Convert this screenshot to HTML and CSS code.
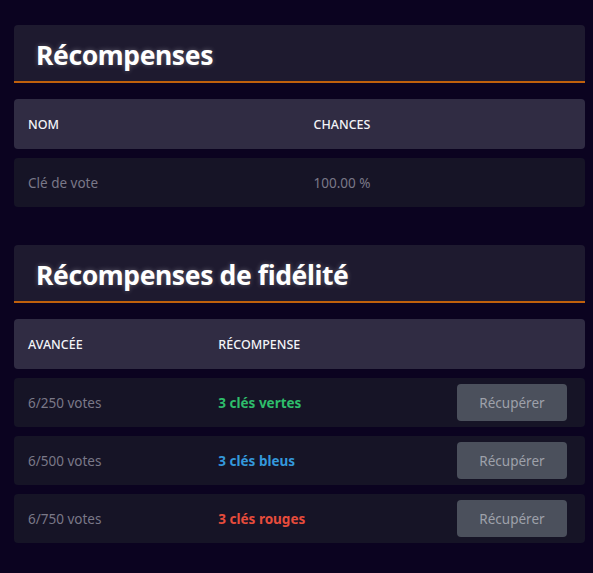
FILE: index.html
```html
<!DOCTYPE html>
<html lang="fr">
<head>
<meta charset="utf-8">
<link rel="stylesheet" href="styles.css">
</head>
<body>
<main class="page">
  <section class="block">
    <h2 class="title">Récompenses</h2>
    <div class="table cols-2">
      <div class="row head">
        <div class="cell">NOM</div>
        <div class="cell">CHANCES</div>
      </div>
      <div class="row">
        <div class="cell muted">Clé de vote</div>
        <div class="cell muted">100.00 %</div>
      </div>
    </div>
  </section>

  <section class="block">
    <h2 class="title">Récompenses de fidélité</h2>
    <div class="table cols-3">
      <div class="row head">
        <div class="cell">AVANCÉE</div>
        <div class="cell">RÉCOMPENSE</div>
        <div class="cell"></div>
      </div>
      <div class="row">
        <div class="cell muted">6/250 votes</div>
        <div class="cell reward green">3 clés vertes</div>
        <div class="cell action"><button class="btn">Récupérer</button></div>
      </div>
      <div class="row">
        <div class="cell muted">6/500 votes</div>
        <div class="cell reward blue">3 clés bleus</div>
        <div class="cell action"><button class="btn">Récupérer</button></div>
      </div>
      <div class="row">
        <div class="cell muted">6/750 votes</div>
        <div class="cell reward red">3 clés rouges</div>
        <div class="cell action"><button class="btn">Récupérer</button></div>
      </div>
    </div>
  </section>
</main>
</body>
</html>
```

FILE: styles.css
```css
* { box-sizing: border-box; }

html, body {
  margin: 0;
  padding: 0;
  background: #0b0320;
  font-family: "Noto Sans", "Open Sans", sans-serif;
}

.page {
  padding: 25px 8px 0 14px;
  display: flex;
  flex-direction: column;
  gap: 38px;
  width: 593px;
}

.block {
  display: flex;
  flex-direction: column;
  gap: 16px;
}

.title {
  margin: 0;
  height: 58px;
  padding: 3px 22px 0 22px;
  display: flex;
  align-items: center;
  background: #1e1a2f;
  border-radius: 4px 4px 0 0;
  border-bottom: 2px solid #c0600c;
  color: #ffffff;
  font-size: 26.5px;
  font-weight: 700;
  letter-spacing: -0.4px;
  text-shadow: 0 0 5px rgba(255, 255, 255, 0.3);
}

.table {
  display: flex;
  flex-direction: column;
  gap: 9px;
}

.row {
  display: grid;
  height: 49px;
  align-items: center;
  background: #161426;
  border-radius: 4px;
}

.cols-2 .row { grid-template-columns: 1fr 1fr; }
.cols-3 .row { grid-template-columns: 1fr 1fr 1fr; }

.row.head {
  background: #302c43;
  height: 50px;
}

.cell {
  padding: 0 14px;
  font-size: 13.5px;
}

.head .cell {
  color: #f4f4f8;
  font-size: 12.5px;
  font-weight: 500;
}

.muted { color: #7a7888; }

.reward {
  font-weight: 700;
  font-size: 13.5px;
}
.green { color: #2ebd6b; }
.blue { color: #3498db; }
.red { color: #e74c3c; }

.action {
  display: flex;
  justify-content: flex-end;
  padding-right: 18px;
}

.btn {
  width: 110px;
  height: 37px;
  border: none;
  border-radius: 4px;
  background: #4b505c;
  color: #9ea1aa;
  font-family: inherit;
  font-size: 13.5px;
}
```
